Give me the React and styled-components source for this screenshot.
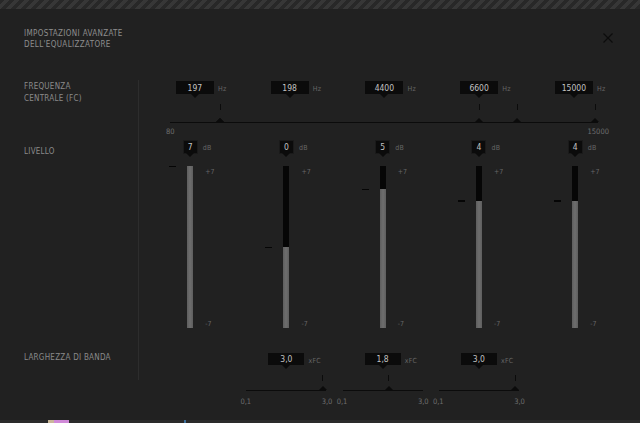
import React from 'react';
import styled, { createGlobalStyle } from 'styled-components';

const Global = createGlobalStyle`
  html, body { margin: 0; padding: 0; background: #212121; }
  body { overflow: hidden; }
`;

const Page = styled.div`
  width: 640px;
  height: 423px;
  background: #212121;
  display: flex;
  flex-direction: column;
  font-family: "DejaVu Sans Condensed", "DejaVu Sans", sans-serif;
  font-stretch: condensed;
  color: #8a8a8a;
  overflow: hidden;
`;

const Stripes = styled.div`
  height: 9px;
  flex: none;
  background: repeating-linear-gradient(135deg, #282828 0 3.5px, #373737 3.5px 7px);
`;

const Header = styled.header`
  height: 71px;
  flex: none;
  box-sizing: border-box;
  padding: 19px 27px 0 24px;
  display: flex;
  justify-content: space-between;
  align-items: flex-start;
`;

const Title = styled.h1`
  margin: 0;
  font-size: 8px;
  line-height: 11px;
  font-weight: normal;
  letter-spacing: 0.35px;
  color: #8e8e8e;
  text-transform: uppercase;
`;

const CloseButton = styled.button`
  background: none;
  border: 0;
  padding: 0;
  margin-top: 3px;
  width: 10px;
  height: 10px;
  display: block;
  cursor: pointer;
`;

const Body = styled.div`
  display: flex;
  height: 340px;
  flex: none;
`;

const LabelCol = styled.div`
  width: 139px;
  flex: none;
  box-sizing: border-box;
  height: 300px;
  border-right: 1px solid #2d2d2d;
  padding-left: 24px;
  display: flex;
  flex-direction: column;
`;

const RowLabel = styled.div`
  font-size: 8px;
  line-height: 12px;
  letter-spacing: 0.25px;
  color: #8a8a8a;
  margin-top: ${p => p.$top}px;
  text-transform: uppercase;
`;

const Content = styled.div`
  flex: 1;
  display: flex;
  flex-direction: column;
`;

/* ---------- shared bits ---------- */
const ValueBox = styled.div`
  position: relative;
  width: ${p => p.$w}px;
  height: ${p => p.$h}px;
  box-sizing: border-box;
  background: #0b0b0b;
  border: ${p => (p.$framed ? '1px solid #1a1a1a' : 'none')};
  color: #c2c2c2;
  font-size: 8.5px;
  display: flex;
  align-items: center;
  justify-content: center;
  &::after {
    content: '';
    position: absolute;
    left: 50%;
    top: 100%;
    margin-left: -4px;
    border-left: 4px solid transparent;
    border-right: 4px solid transparent;
    border-top: 4px solid #0b0b0b;
  }
`;

const BoxRow = styled.div`
  display: grid;
  grid-template-columns: 1fr auto 1fr;
  align-items: center;
`;

const Unit = styled.span`
  font-size: 7px;
  color: #666;
  margin-left: ${p => p.$gap || 5}px;
  padding-top: ${p => p.$drop || 2}px;
  letter-spacing: 0.3px;
`;

const Track = styled.div`
  position: relative;
  width: ${p => p.$w}px;
  height: ${p => p.$h}px;
  margin-left: ${p => p.$ml || 0}px;
  margin-top: ${p => p.$mt || 0}px;
  border-bottom: 1px solid #0b0b0b;
  align-self: ${p => (p.$center ? 'center' : 'auto')};
`;

const Thumb = styled.span`
  position: absolute;
  bottom: 0;
  width: 0;
  height: 0;
  margin-left: -4px;
  border-left: 4px solid transparent;
  border-right: 4px solid transparent;
  border-bottom: 4px solid #0b0b0b;
`;

const Tick = styled.span`
  position: absolute;
  top: 0;
  width: 1px;
  height: 6px;
  margin-left: -0.5px;
  background: #0b0b0b;
`;

const ScaleRow = styled.div`
  display: flex;
  justify-content: space-between;
  width: ${p => p.$w}px;
  margin-left: ${p => p.$ml || 0}px;
  margin-top: ${p => p.$mt || 0}px;
  align-self: ${p => (p.$center ? 'center' : 'auto')};
  font-size: 7.5px;
  line-height: 9px;
  color: #6e6e6e;
`;

/* ---------- frequency ---------- */
const FreqSection = styled.section`
  height: 58px;
  flex: none;
  display: flex;
  flex-direction: column;
  padding-top: 1px;
  box-sizing: border-box;
`;

const FreqGrid = styled.div`
  display: grid;
  grid-template-columns: repeat(5, 94.75px);
  padding-left: 8.5px;
  height: 13px;
`;

/* ---------- level ---------- */
const LevelSection = styled.section`
  height: 192px;
  flex: none;
  display: grid;
  grid-template-columns: repeat(5, 96.25px);
  padding-left: 3px;
`;

const LevelCol = styled.div`
  display: flex;
  flex-direction: column;
  padding-top: 2px;
`;

const BarRow = styled.div`
  display: grid;
  grid-template-columns: 1fr 6px 1fr;
  height: 162px;
  margin-top: 12px;
`;

const DashCell = styled.div`
  position: relative;
`;

const Dash = styled.span`
  position: absolute;
  right: 11px;
  width: 7px;
  height: 1.5px;
  margin-top: -0.5px;
  background: #050505;
`;

const Bar = styled.div`
  background: #060606;
  display: flex;
  flex-direction: column;
  justify-content: flex-end;
`;

const Fill = styled.div`
  background: linear-gradient(90deg, #5e5e5e, #6e6e6e 50%, #5e5e5e);
`;

const BarScale = styled.div`
  display: flex;
  flex-direction: column;
  justify-content: space-between;
  padding: 2px 0 0 12px;
  font-size: 7px;
  line-height: 8px;
  color: #666;
`;

/* ---------- bandwidth ---------- */
const BandSection = styled.section`
  height: 90px;
  flex: none;
  display: grid;
  grid-template-columns: repeat(5, 96.25px);
  padding-left: 3px;
`;

const BandCol = styled.div`
  display: flex;
  flex-direction: column;
  padding-top: 23px;
`;

/* ---------- footer ---------- */
const Footer = styled.div`
  height: 3px;
  flex: none;
  background: #2a2a2a;
  display: flex;
  align-items: stretch;
  padding-left: 48px;
  gap: 115px;
`;

const Thumbnail = styled.span`
  width: 21px;
  background: linear-gradient(90deg, #c9b79a 0 30%, #d08ad8 30% 100%);
`;

const Pin = styled.span`
  width: 2px;
  background: #3d6f9a;
`;

const freqBands = [
  { v: '197', pos: 0.117 },
  { v: '198', pos: 0.117 },
  { v: '4400', pos: 0.722 },
  { v: '6600', pos: 0.811 },
  { v: '15000', pos: 0.993 },
];

const levels = [7, 0, 5, 4, 4];

const widths = [null, 3.0, 1.8, 3.0, null];

function CloseIcon() {
  return (
    <svg width="10" height="10" viewBox="0 0 10 10">
      <path d="M0.5 0.5 L9.5 9.5 M9.5 0.5 L0.5 9.5" stroke="#0c0c0c" strokeWidth="1.3" fill="none" />
    </svg>
  );
}

function fmt(n) {
  return n.toFixed(1).replace('.', ',');
}

export default function App() {
  const freqTrackW = 428;
  return (
    <Page>
      <Global />
      <Stripes />
      <Header>
        <Title>
          Impostazioni avanzate
          <br />
          dell'equalizzatore
        </Title>
        <CloseButton aria-label="Chiudi">
          <CloseIcon />
        </CloseButton>
      </Header>
      <Body>
        <LabelCol>
          <RowLabel $top={1}>
            Frequenza
            <br />
            centrale (FC)
          </RowLabel>
          <RowLabel $top={41}>Livello</RowLabel>
          <RowLabel $top={194}>Larghezza di banda</RowLabel>
        </LabelCol>
        <Content>
          <FreqSection>
            <FreqGrid>
              {freqBands.map(b => (
                <BoxRow key={b.v}>
                  <span />
                  <ValueBox $w={38} $h={13}>{b.v}</ValueBox>
                  <Unit $gap={4}>Hz</Unit>
                </BoxRow>
              ))}
            </FreqGrid>
            <Track $w={freqTrackW} $h={18} $ml={31} $mt={10}>
              {freqBands.map(b => (
                <React.Fragment key={b.v}>
                  <Tick style={{ left: `${b.pos * 100}%` }} />
                  <Thumb style={{ left: `${b.pos * 100}%` }} />
                </React.Fragment>
              ))}
            </Track>
            <ScaleRow $w={443} $ml={27} $mt={4}>
              <span>80</span>
              <span>15000</span>
            </ScaleRow>
          </FreqSection>

          <LevelSection>
            {levels.map((lv, i) => {
              const pct = ((lv + 7) / 14) * 100;
              return (
                <LevelCol key={i}>
                  <BoxRow>
                    <span />
                    <ValueBox $w={15} $h={14} $framed>{lv}</ValueBox>
                    <Unit $gap={5}>dB</Unit>
                  </BoxRow>
                  <BarRow>
                    <DashCell>
                      <Dash style={{ top: `${100 - pct}%` }} />
                    </DashCell>
                    <Bar>
                      <Fill style={{ height: `${pct}%` }} />
                    </Bar>
                    <BarScale>
                      <span>+7</span>
                      <span>-7</span>
                    </BarScale>
                  </BarRow>
                </LevelCol>
              );
            })}
          </LevelSection>

          <BandSection>
            {widths.map((w, i) => {
              if (w === null) return <div key={i} />;
              const frac = (w - 0.1) / 2.9;
              const left = 3.5 + frac * (80 - 7);
              return (
                <BandCol key={i}>
                  <BoxRow>
                    <span />
                    <ValueBox $w={36} $h={12}>{fmt(w)}</ValueBox>
                    <Unit $gap={4} $drop={3}>xFC</Unit>
                  </BoxRow>
                  <Track $w={80} $h={15} $mt={10} $center>
                    <Tick style={{ left: `${left}px` }} />
                    <Thumb style={{ left: `${left}px` }} />
                  </Track>
                  <ScaleRow $w={92} $mt={6} $center>
                    <span>0,1</span>
                    <span>3,0</span>
                  </ScaleRow>
                </BandCol>
              );
            })}
          </BandSection>
        </Content>
      </Body>
      <Footer>
        <Thumbnail />
        <Pin />
      </Footer>
    </Page>
  );
}
